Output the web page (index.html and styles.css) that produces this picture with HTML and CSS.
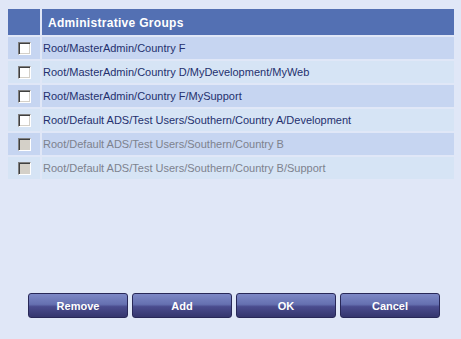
FILE: index.html
```html
<!DOCTYPE html>
<html lang="en">
  <head>
    <meta charset="UTF-8" />
    <meta name="viewport" content="width=device-width, initial-scale=1.0" />
    <title>Administrative Groups</title>
    <link rel="stylesheet" href="styles.css">
  </head>
  <body>
    <div class="groups">
      <div class="row head">
        <div class="cell check"></div>
        <div class="cell name">Administrative Groups</div>
      </div>
      <div class="row odd">
        <div class="cell check"><span class="box"></span></div>
        <div class="cell name">Root/MasterAdmin/Country F</div>
      </div>
      <div class="row even">
        <div class="cell check"><span class="box"></span></div>
        <div class="cell name">Root/MasterAdmin/Country D/MyDevelopment/MyWeb</div>
      </div>
      <div class="row odd">
        <div class="cell check"><span class="box"></span></div>
        <div class="cell name">Root/MasterAdmin/Country F/MySupport</div>
      </div>
      <div class="row even">
        <div class="cell check"><span class="box"></span></div>
        <div class="cell name">Root/Default ADS/Test Users/Southern/Country A/Development</div>
      </div>
      <div class="row odd disabled">
        <div class="cell check"><span class="box"></span></div>
        <div class="cell name">Root/Default ADS/Test Users/Southern/Country B</div>
      </div>
      <div class="row even disabled">
        <div class="cell check"><span class="box"></span></div>
        <div class="cell name">Root/Default ADS/Test Users/Southern/Country B/Support</div>
      </div>
    </div>

    <div class="buttons">
      <button class="btn">Remove</button>
      <button class="btn">Add</button>
      <button class="btn">OK</button>
      <button class="btn">Cancel</button>
    </div>
  </body>
</html>
```

FILE: styles.css
```css
html,
body {
  height: 100%;
}

body {
  margin: 0;
  background: #e0e7f7;
  font-family: Tahoma, "Liberation Sans", Arial, sans-serif;
  font-size: 11px;
  display: flex;
  flex-direction: column;
}

.groups {
  flex: 1;
  display: flex;
  flex-direction: column;
  gap: 2px;
  margin: 9px 7px 0 8px;
}

.row {
  display: flex;
  gap: 2px;
  height: 22px;
}

.row.head {
  height: 26px;
}

.cell {
  display: flex;
  align-items: center;
}

.check {
  width: 32px;
  justify-content: center;
  flex-shrink: 0;
}

.name {
  flex: 1;
  padding-left: 1px;
  color: #24306e;
}

.head .cell {
  background: #5370b3;
}

.head .name {
  color: #fff;
  font-weight: bold;
  font-size: 12px;
  letter-spacing: 0.3px;
  padding: 1px 0 0 6px;
}

.odd .cell {
  background: #c6d5f1;
}

.even .cell {
  background: #d6e4f5;
}

.disabled .name {
  color: #7d828e;
}

/* classic sunken checkbox */
.box {
  width: 13px;
  height: 13px;
  box-sizing: border-box;
  background: #fff;
  border-top: 1px solid #808080;
  border-left: 1px solid #808080;
  border-right: 1px solid #fff;
  border-bottom: 1px solid #fff;
  box-shadow: inset 1px 1px 0 #404040, inset -1px -1px 0 #d4d0c8;
}

.disabled .box {
  background: #d4d0c8;
}

.buttons {
  display: flex;
  justify-content: flex-end;
  gap: 4px;
  padding: 0 21px 21px 0;
}

.btn {
  width: 100px;
  height: 25px;
  border: 1px solid #282858;
  border-radius: 3px;
  background: linear-gradient(#7d88c6, #6570b0 45%, #4a4c8e 55%, #35366e);
  color: #fff;
  font-family: Tahoma, "Liberation Sans", Arial, sans-serif;
  font-size: 11px;
  font-weight: bold;
  padding: 0;
}
```
